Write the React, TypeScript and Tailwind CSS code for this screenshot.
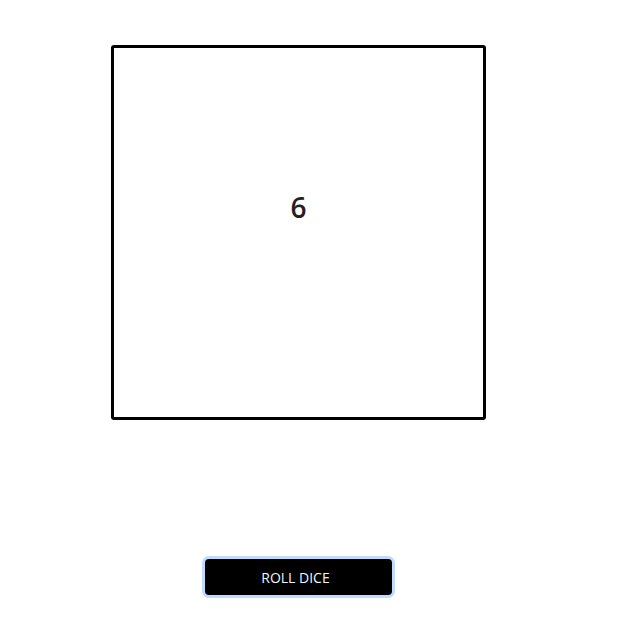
import { useState } from "react";

export default function App() {
  const [value, setValue] = useState(6);

  const roll = () => setValue(Math.floor(Math.random() * 6) + 1);

  return (
    <div
      className="min-h-screen bg-white"
      style={{ fontFamily: '"Open Sans", "Noto Sans", sans-serif' }}
    >
      <div className="w-[597px] flex flex-col items-center pt-[45px]">
        <div className="w-[375px] h-[375px] border-[3px] border-black rounded-[3px] flex justify-center pt-[139px]">
          <span className="text-[28px] leading-[40px] font-semibold text-[#222]">
            {value}
          </span>
        </div>
        <button
          onClick={roll}
          className="mt-[139px] w-[187px] h-[36px] pr-[6px] bg-black text-[#f0f7ff] text-[14px] rounded-[4px] ring-[3px] ring-[#bfdbfe]"
        >
          ROLL DICE
        </button>
      </div>
    </div>
  );
}
